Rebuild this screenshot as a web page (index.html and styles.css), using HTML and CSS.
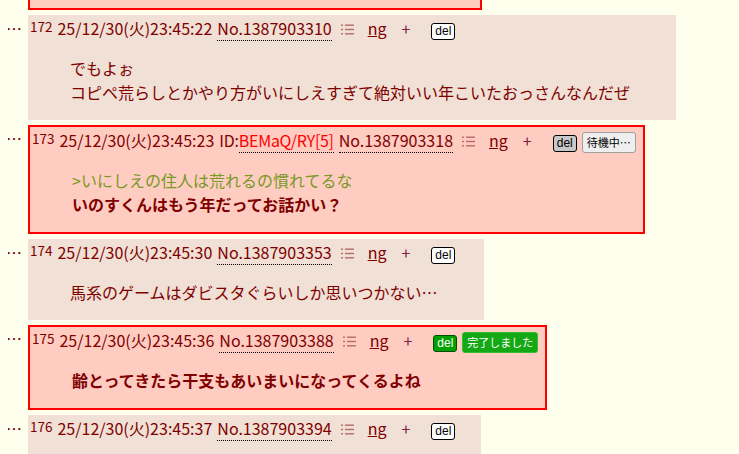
FILE: index.html
```html
<!DOCTYPE html>
<html lang="ja">
<head>
<meta charset="utf-8">
<title>スレッド</title>
<link rel="stylesheet" href="styles.css">
</head>
<body>
<div class="thread">
  <div class="post tail">
    <div class="mark"></div>
    <div class="cell hl tail-cell"></div>
  </div>

  <div class="post">
    <div class="mark">…</div>
    <div class="cell">
      <div class="head"><span class="num">172</span><span class="date">25/12/30(火)23:45:22</span><a class="no">No.1387903310</a><svg class="menu" width="13" height="11" viewBox="0 0 13 11"><g fill="#b86a6a"><rect x="0" y="0.5" width="2" height="1.4"/><rect x="4" y="0.5" width="9" height="1.4"/><rect x="0" y="4.8" width="2" height="1.4"/><rect x="4" y="4.8" width="9" height="1.4"/><rect x="0" y="9.1" width="2" height="1.4"/><rect x="4" y="9.1" width="9" height="1.4"/></g></svg><a class="ng">ng</a><span class="plus">+</span><button class="del">del</button></div>
      <blockquote>でもよぉ<br>コピペ荒らしとかやり方がいにしえすぎて絶対いい年こいたおっさんなんだぜ</blockquote>
    </div>
  </div>

  <div class="post">
    <div class="mark">…</div>
    <div class="cell hl">
      <div class="head"><span class="num">173</span><span class="date">25/12/30(火)23:45:23</span><span class="id">ID:<span class="idv">BEMaQ/RY[5]</span></span><a class="no no-after-id">No.1387903318</a><svg class="menu" width="13" height="11" viewBox="0 0 13 11"><g fill="#b86a6a"><rect x="0" y="0.5" width="2" height="1.4"/><rect x="4" y="0.5" width="9" height="1.4"/><rect x="0" y="4.8" width="2" height="1.4"/><rect x="4" y="4.8" width="9" height="1.4"/><rect x="0" y="9.1" width="2" height="1.4"/><rect x="4" y="9.1" width="9" height="1.4"/></g></svg><a class="ng">ng</a><span class="plus">+</span><button class="del del-wait">del</button><button class="status">待機中…</button></div>
      <blockquote><span class="quote">&gt;いにしえの住人は荒れるの慣れてるな</span><br><b>いのすくんはもう年だってお話かい？</b></blockquote>
    </div>
  </div>

  <div class="post">
    <div class="mark">…</div>
    <div class="cell">
      <div class="head"><span class="num">174</span><span class="date">25/12/30(火)23:45:30</span><a class="no">No.1387903353</a><svg class="menu" width="13" height="11" viewBox="0 0 13 11"><g fill="#b86a6a"><rect x="0" y="0.5" width="2" height="1.4"/><rect x="4" y="0.5" width="9" height="1.4"/><rect x="0" y="4.8" width="2" height="1.4"/><rect x="4" y="4.8" width="9" height="1.4"/><rect x="0" y="9.1" width="2" height="1.4"/><rect x="4" y="9.1" width="9" height="1.4"/></g></svg><a class="ng">ng</a><span class="plus">+</span><button class="del">del</button></div>
      <blockquote>馬系のゲームはダビスタぐらいしか思いつかない…</blockquote>
    </div>
  </div>

  <div class="post">
    <div class="mark">…</div>
    <div class="cell hl">
      <div class="head"><span class="num">175</span><span class="date">25/12/30(火)23:45:36</span><a class="no">No.1387903388</a><svg class="menu" width="13" height="11" viewBox="0 0 13 11"><g fill="#b86a6a"><rect x="0" y="0.5" width="2" height="1.4"/><rect x="4" y="0.5" width="9" height="1.4"/><rect x="0" y="4.8" width="2" height="1.4"/><rect x="4" y="4.8" width="9" height="1.4"/><rect x="0" y="9.1" width="2" height="1.4"/><rect x="4" y="9.1" width="9" height="1.4"/></g></svg><a class="ng">ng</a><span class="plus">+</span><button class="del del-done">del</button><button class="status status-done">完了しました</button></div>
      <blockquote><b>齢とってきたら干支もあいまいになってくるよね</b></blockquote>
    </div>
  </div>

  <div class="post">
    <div class="mark">…</div>
    <div class="cell cell-min">
      <div class="head"><span class="num">176</span><span class="date">25/12/30(火)23:45:37</span><a class="no">No.1387903394</a><svg class="menu" width="13" height="11" viewBox="0 0 13 11"><g fill="#b86a6a"><rect x="0" y="0.5" width="2" height="1.4"/><rect x="4" y="0.5" width="9" height="1.4"/><rect x="0" y="4.8" width="2" height="1.4"/><rect x="4" y="4.8" width="9" height="1.4"/><rect x="0" y="9.1" width="2" height="1.4"/><rect x="4" y="9.1" width="9" height="1.4"/></g></svg><a class="ng">ng</a><span class="plus">+</span><button class="del">del</button></div>
    </div>
  </div>
</div>
</body>
</html>
```
FILE: styles.css
```css
* {
  box-sizing: border-box;
}

html, body {
  background: #ffffee;
}

body {
  margin: 0 8px;
  color: #800000;
  font-family: "Noto Sans CJK JP", "Noto Sans", sans-serif;
  font-size: 16px;
  overflow: hidden;
  height: 454px;
}

.thread {
  display: flex;
  flex-direction: column;
  align-items: flex-start;
  gap: 5px;
}

.post {
  display: flex;
  align-items: flex-start;
}

.mark {
  flex: none;
  width: 22px;
  margin-left: -2px;
  padding-top: 2px;
  line-height: 22px;
  color: #800000;
}

.cell {
  flex: none;
  background: #f0e0d6;
  padding: 2px;
}

.cell.hl {
  background: #ffccc2;
  border: 2px solid #ff0000;
}

.tail-cell {
  width: 454px;
  height: 10px;
  border-top: 0 !important;
  padding: 0;
}

.cell-min {
  min-width: 453px;
  min-height: 40px;
}

.head {
  height: 22px;
  line-height: 22px;
  white-space: nowrap;
  padding-right: 5px;
}

.num {
  font-size: 13.5px;
  line-height: 1;
  vertical-align: 3px;
  margin-right: 5px;
}

.id {
  margin-left: 5px;
  letter-spacing: -0.2px;
}

.idv {
  color: #ff0000;
  border-bottom: 1px dotted #000;
  letter-spacing: -0.3px;
}

.no {
  margin-left: 5px;
  color: #800000;
  text-decoration: none;
  border-bottom: 1px dotted #000;
}

.no-after-id {
  margin-left: 5px;
}

.menu {
  margin-left: 9px;
  vertical-align: baseline;
}

.ng {
  margin-left: 14px;
  color: #800000;
  text-decoration: underline;
}

.plus {
  margin-left: 15px;
  color: #802040;
}

.del {
  display: inline-block;
  margin: 0 0 0 21px;
  height: 17px;
  padding: 0 3px;
  border: 1px solid #000;
  border-radius: 3px;
  background: #fff;
  color: #000;
  font-family: "Liberation Sans", Arial, sans-serif;
  font-size: 12px;
  line-height: 15px;
}

.del-wait {
  background: #c8c8c8;
}

.del-done {
  background: #00a000;
  color: #fff;
  border-color: #004d00;
}

.status {
  display: inline-block;
  margin: 0 0 0 5px;
  height: 21px;
  padding: 0 4px;
  border: 1px solid #a0a0a0;
  border-radius: 3px;
  background: #efefef;
  color: #000;
  font-family: "Noto Sans CJK JP", sans-serif;
  font-size: 11px;
  line-height: 19px;
}

.status-done {
  background: #14a814;
  border-color: #2fbf2f;
  color: #fff;
}

blockquote {
  margin: 17px 44px 14px 40px;
  line-height: 24px;
}

.quote {
  color: #789922;
}

b {
  font-weight: bold;
}
```
